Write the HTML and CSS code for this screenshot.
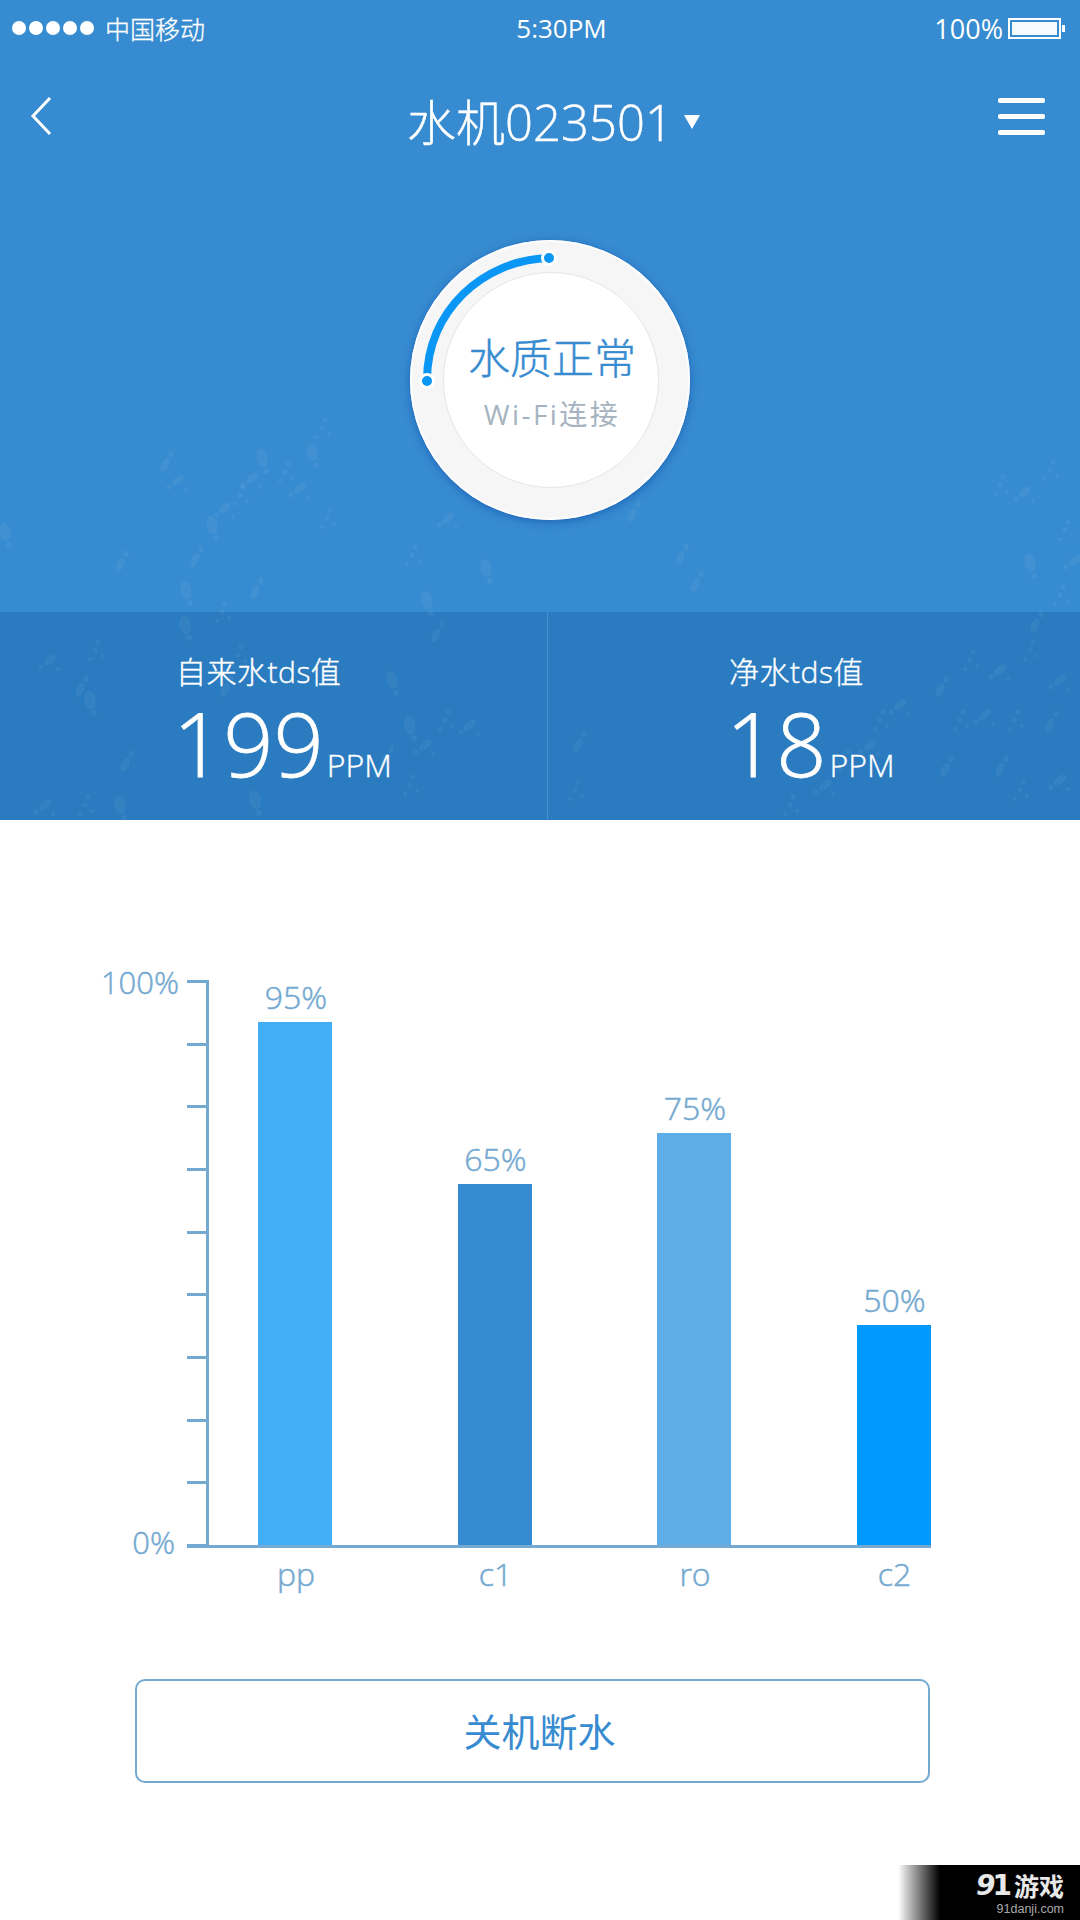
FILE: index.html
```html
<!DOCTYPE html>
<html lang="zh">
<head>
<meta charset="utf-8">
<title>水机023501</title>
<link rel="stylesheet" href="styles.css">
</head>
<body>
<div class="page">
  <section class="hero">
    <div class="status">
      <div class="status-left">
        <span class="signal"><i></i><i></i><i></i><i></i><i></i></span>
        <span>中国移动</span>
      </div>
      <span class="status-time">5:30PM</span>
      <div class="status-right">
        <span>100%</span>
        <span class="battery"><span class="battery-fill"></span></span>
      </div>
    </div>
    <div class="nav">
      <svg class="back" width="24" height="40" viewBox="0 0 24 40"><path d="M21 2 4 20l17 18" fill="none" stroke="#fff" stroke-width="3"/></svg>
      <div class="nav-title">水机023501<span class="caret"></span></div>
      <div class="menu"><i></i><i></i><i></i></div>
    </div>
    <div class="gauge">
      <svg class="gauge-arc" width="280" height="280" viewBox="0 0 280 280">
        <path d="M17 140C17 72 72 20 139 18" fill="none" stroke="#0a96f5" stroke-width="8"/>
        <circle cx="17" cy="141" r="6.500" fill="#0a96f5" stroke="#fff" stroke-width="3"/>
        <circle cx="139" cy="18" r="6.500" fill="#0a96f5" stroke="#fff" stroke-width="3"/>
      </svg>
      <div class="gauge-inner">
        <div class="gauge-title">水质正常</div>
        <div class="gauge-sub">Wi-Fi连接</div>
      </div>
    </div>
  </section>
  <section class="stats">
    <div class="stat">
      <div class="stat-label">自来水tds值</div>
      <div class="stat-value">199<span class="stat-unit">PPM</span></div>
    </div>
    <div class="stat stat-right">
      <div class="stat-label">净水tds值</div>
      <div class="stat-value">18<span class="stat-unit">PPM</span></div>
    </div>
  </section>
  <svg class="texture" width="1080" height="820" viewBox="0 0 1080 820" aria-hidden="true">
    <defs>
      <g id="a"><ellipse rx="3" ry="7" transform="rotate(25)"/><ellipse cx="6" cy="-11" rx="2" ry="3"/></g>
      <g id="b"><ellipse rx="7" ry="3" transform="rotate(-40)"/><circle cx="-9" cy="7" r="2"/><circle cx="8" cy="9" r="1.500"/></g>
      <g id="c"><ellipse rx="5" ry="9" transform="rotate(-12)"/><circle cx="4" cy="13" r="2.500"/></g>
      <g id="d"><circle r="2"/><circle cx="7" cy="6" r="1.500"/><circle cx="-5" cy="9" r="1.500"/><circle cx="3" cy="-8" r="2"/></g>
    </defs>
    <g class="texture-marks">
      <use href="#a" x="165" y="465"/><use href="#b" x="178" y="480"/>
      <use href="#c" x="212" y="525"/><use href="#b" x="225" y="508"/><use href="#d" x="240" y="495"/>
      <use href="#b" x="252" y="478"/><use href="#c" x="262" y="458"/><use href="#d" x="285" y="472"/>
      <use href="#c" x="312" y="452"/><use href="#d" x="322" y="428"/><use href="#b" x="300" y="488"/>
      <use href="#d" x="327" y="518"/><use href="#a" x="120" y="565"/><use href="#c" x="5" y="532"/>
      <use href="#c" x="186" y="590"/><use href="#a" x="195" y="560"/><use href="#c" x="185" y="625"/>
      <use href="#d" x="222" y="612"/><use href="#a" x="255" y="592"/><use href="#b" x="448" y="518"/>
      <use href="#d" x="412" y="555"/><use href="#c" x="427" y="600"/><use href="#a" x="436" y="635"/>
      <use href="#c" x="486" y="568"/><use href="#d" x="95" y="650"/><use href="#a" x="80" y="690"/>
      <use href="#b" x="50" y="660"/><use href="#a" x="125" y="765"/><use href="#c" x="90" y="700"/>
      <use href="#d" x="238" y="655"/><use href="#a" x="225" y="690"/>
      <use href="#c" x="392" y="680"/><use href="#c" x="410" y="725"/><use href="#b" x="425" y="745"/>
      <use href="#d" x="445" y="720"/><use href="#a" x="385" y="760"/><use href="#b" x="470" y="725"/>
      <use href="#d" x="410" y="785"/><use href="#c" x="255" y="800"/><use href="#b" x="45" y="805"/>
      <use href="#d" x="85" y="805"/><use href="#c" x="120" y="805"/>
      <use href="#a" x="632" y="515"/><use href="#a" x="680" y="558"/><use href="#a" x="695" y="585"/>
      <use href="#d" x="1000" y="485"/><use href="#b" x="1025" y="492"/><use href="#d" x="1050" y="470"/>
      <use href="#d" x="1065" y="530"/><use href="#c" x="1030" y="563"/><use href="#d" x="1060" y="595"/>
      <use href="#b" x="1075" y="560"/><use href="#a" x="1035" y="625"/><use href="#d" x="970" y="660"/>
      <use href="#b" x="1000" y="670"/><use href="#d" x="1030" y="650"/><use href="#b" x="1060" y="680"/>
      <use href="#a" x="940" y="690"/><use href="#d" x="960" y="720"/><use href="#b" x="985" y="715"/>
      <use href="#d" x="1015" y="720"/><use href="#a" x="1050" y="725"/><use href="#b" x="900" y="705"/>
      <use href="#d" x="880" y="720"/><use href="#b" x="870" y="745"/><use href="#d" x="845" y="760"/>
      <use href="#b" x="825" y="785"/><use href="#d" x="790" y="805"/><use href="#a" x="1000" y="770"/>
      <use href="#d" x="1020" y="790"/><use href="#a" x="945" y="770"/><use href="#b" x="1060" y="780"/>
      <use href="#a" x="578" y="745"/><use href="#d" x="575" y="790"/>
    </g>
  </svg>
  <section class="chart">
    <div class="y-labels"><span>100%</span><span class="y-zero">0%</span></div>
    <div class="plot-wrap">
      <div class="plot">
        <div class="ticks"><i></i><i></i><i></i><i></i><i></i><i></i><i></i><i></i><i></i><i></i></div>
        <div class="bars">
          <div class="bar-col"><span class="bar-value">95%</span><div class="bar bar-pp" style="height:523px"></div></div>
          <div class="bar-col"><span class="bar-value">65%</span><div class="bar bar-c1" style="height:361px"></div></div>
          <div class="bar-col"><span class="bar-value">75%</span><div class="bar bar-ro" style="height:412px"></div></div>
          <div class="bar-col"><span class="bar-value">50%</span><div class="bar bar-c2" style="height:220px"></div></div>
        </div>
      </div>
      <div class="x-labels"><span>pp</span><span>c1</span><span>ro</span><span>c2</span></div>
    </div>
  </section>
  <div class="action"><div class="button">关机断水</div></div>
  <div class="watermark">
    <div class="wm-logo"><b>9<em>1</em></b><span>游戏</span></div>
    <div class="wm-url">91danji.com</div>
  </div>
</div>
</body>
</html>
```
FILE: styles.css
```css
* { box-sizing: border-box; }
html, body { margin: 0; padding: 0; }
body { background: #fff; font-family: "Open Sans", "Noto Sans CJK SC", sans-serif; }
i, em { display: block; font-style: normal; }
.page { width: 1080px; height: 1920px; position: relative; overflow: hidden; }

.hero { height: 612px; background: #378bd0; color: #fff; position: relative; }
.texture { position: absolute; left: 0; top: 0; pointer-events: none; }
.texture-marks { fill: #fff; fill-opacity: .05; stroke: #fff; stroke-opacity: .025; stroke-width: 2; filter: blur(.6px); }

.status { height: 56px; display: grid; grid-template-columns: 1fr auto 1fr; align-items: center; padding: 0 12px; font-size: 26px; }
.status-left { display: flex; align-items: center; gap: 11px; font-size: 25px; font-weight: 300; -webkit-text-stroke: .3px #fff; }
.signal { display: flex; gap: 3px; }
.signal i { width: 14px; height: 14px; border-radius: 50%; background: #fff; }
.status-time { margin-left: 43px; font-weight: 400; }
.status-right { display: flex; justify-content: flex-end; align-items: center; gap: 5px; font-size: 27px; }
.battery { width: 53px; height: 21px; border: 2px solid #fff; padding: 2px; margin-right: 7px; position: relative; display: block; }
.battery::after { content: ""; position: absolute; right: -6px; top: 5px; width: 3px; height: 7px; background: #fff; }
.battery-fill { display: block; height: 100%; background: #f4fbff; }

.nav { height: 92px; margin-top: 24px; display: grid; grid-template-columns: 1fr auto 1fr; align-items: center; padding: 0 35px 0 29px; }
.back { margin-top: -20px; }
.nav-title { font-size: 49px; line-height: 60px; font-weight: 300; -webkit-text-stroke: .4px #fff; display: flex; align-items: center; margin-top: -8px; margin-left: 33px; }
.caret { width: 0; height: 0; border-left: 8px solid transparent; border-right: 8px solid transparent; border-top: 14px solid #fff; margin-left: 11px; }
.menu { justify-self: end; display: flex; flex-direction: column; gap: 11px; margin-top: -20px; }
.menu i { width: 47px; height: 5px; border-radius: 2px; background: #fff; }

.gauge { position: relative; width: 280px; height: 280px; margin: 68px auto 0; left: 10px; border-radius: 50%; background: #f6f6f6; box-shadow: inset 0 0 0 2px #fdfdfd, 0 2px 9px rgba(15, 80, 170, .65); display: flex; align-items: center; justify-content: center; }
.gauge-arc { position: absolute; left: 0; top: 0; }
.gauge-inner { position: relative; left: 1px; width: 216px; height: 216px; border-radius: 50%; background: #fff; border: 1px solid #e6e6e6; display: flex; flex-direction: column; align-items: center; padding: 57px 0 0 2px; }
.gauge-title { font-size: 42px; line-height: 56px; color: #378bd0; font-weight: 300; -webkit-text-stroke: .4px #378bd0; }
.gauge-sub { font-size: 28px; line-height: 40px; color: #a5b3c0; margin-top: 8px; letter-spacing: 2.4px; font-weight: 400; }

.stats { height: 208px; background: #2a7bbf; color: #fff; display: grid; grid-template-columns: 547px 1fr; }
.stat { padding: 37px 0 0 178px; }
.stat-right { border-left: 1px solid #4a8fc9; padding-left: 183px; }
.stat-label { font-size: 30px; line-height: 46px; font-weight: 300; -webkit-text-stroke: .4px #fff; letter-spacing: .5px; margin-left: -2px; }
.stat-value { font-size: 88px; line-height: 92px; font-weight: 300; -webkit-text-stroke: .8px #fff; margin: 2px 0 0 -5px; white-space: nowrap; }
.stat-unit { font-size: 32px; margin-left: 3px; -webkit-text-stroke: .4px #fff; }

.chart { padding: 160px 0 0 100px; display: flex; height: 809px; }
.y-labels { width: 87px; height: 596px; display: flex; flex-direction: column; justify-content: space-between; align-items: flex-end; padding: 0 8px 0 0; font-size: 31px; line-height: 36px; font-weight: 300; -webkit-text-stroke: .5px #74a9d1; color: #74a9d1; margin-top: -16px; }
.y-zero { margin-right: 4px; }
.plot-wrap { width: 744px; }
.plot { display: grid; height: 567px; }
.plot > * { grid-area: 1 / 1; }
.ticks { display: flex; flex-direction: column; justify-content: space-between; border-right: 3px solid #74a9d1; width: 22px; height: 567px; }
.ticks i { height: 3px; background: #74a9d1; width: 19px; }
.ticks i:last-child { width: 22px; }
.bars { display: flex; align-items: flex-end; gap: 125.5px; padding-left: 71px; border-bottom: 3px solid #74a9d1; }
.bar-col { width: 74px; display: flex; flex-direction: column; align-items: center; }
.bar-value { font-size: 32px; line-height: 34px; font-weight: 300; -webkit-text-stroke: .5px #74a9d1; color: #74a9d1; margin-bottom: 8px; padding-left: 2px; white-space: nowrap; }
.bar { width: 74px; }
.bar-pp { background: #42aef6; }
.bar-c1 { background: #378bd0; }
.bar-ro { background: #5eace8; }
.bar-c2 { background: #0099ff; }
.x-labels { display: flex; gap: 125.5px; padding: 9px 0 0 71px; }
.x-labels span { width: 74px; padding-left: 2px; text-align: center; font-size: 32px; line-height: 36px; font-weight: 300; -webkit-text-stroke: .5px #74a9d1; color: #74a9d1; }

.action { padding-left: 135px; margin-top: 50px; }
.button { width: 795px; height: 104px; border: 2px solid #74a9d1; border-radius: 10px; display: flex; align-items: center; justify-content: center; padding: 0 0 4px 14px; font-size: 38px; color: #378bd0; }

.watermark { position: absolute; right: 0; bottom: 0; width: 182px; height: 55px; background: linear-gradient(90deg, #fff 0, #000 42px); color: #fff; padding: 6px 16px 0 0; text-align: right; }
.wm-logo { display: flex; justify-content: flex-end; align-items: center; font-size: 25px; line-height: 30px; font-weight: 700; gap: 3px; color: #e8e8e8; }
.wm-logo b { display: flex; font-size: 28px; font-style: italic; font-family: "DejaVu Sans", sans-serif; letter-spacing: -3px; padding-right: 2px; }
.wm-url { font-size: 12.500px; line-height: 16px; color: #aaa; font-family: "Liberation Sans", sans-serif; }
```
